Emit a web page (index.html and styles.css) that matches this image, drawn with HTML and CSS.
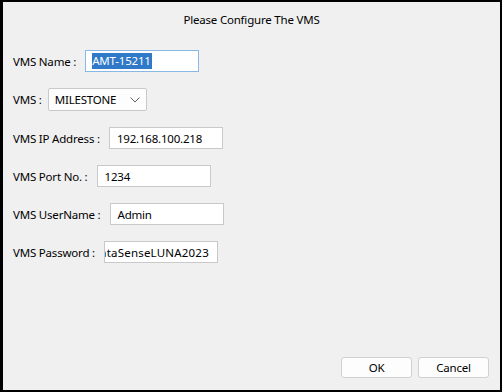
FILE: index.html
```html
<!DOCTYPE html>
<html>
<head>
<meta charset="utf-8">
<link rel="stylesheet" href="styles.css">
</head>
<body>
<div class="dialog">
  <div class="title">Please Configure The VMS</div>
  <div class="form">
    <div class="row">
      <span class="label">VMS Name :</span>
      <div class="field focused"><span class="sel">AMT-15211</span></div>
    </div>
    <div class="row row-tight">
      <span class="label">VMS :</span>
      <div class="combo">
        <span>MILESTONE</span>
        <svg class="chev" width="10" height="6" viewBox="0 0 10 6"><polyline points="0.5,0.5 5,5 9.5,0.5" fill="none" stroke="#606060" stroke-width="1"/></svg>
      </div>
    </div>
    <div class="row">
      <span class="label">VMS IP Address :</span>
      <div class="field">192.168.100.218</div>
    </div>
    <div class="row">
      <span class="label">VMS Port No. :</span>
      <div class="field">1234</div>
    </div>
    <div class="row">
      <span class="label">VMS UserName :</span>
      <div class="field">Admin</div>
    </div>
    <div class="row">
      <span class="label">VMS Password :</span>
      <div class="field right"><span class="pw">DataSenseLUNA2023</span></div>
    </div>
  </div>
  <div class="footer">
    <button class="btn">OK</button>
    <button class="btn">Cancel</button>
  </div>
</div>
</body>
</html>
```

FILE: styles.css
```css
html, body {
  margin: 0;
  padding: 0;
}
body {
  width: 502px;
  height: 392px;
  font-family: "Noto Sans", "Open Sans", sans-serif;
  font-size: 11.5px;
  letter-spacing: -0.2px;
  color: #000;
}
.dialog {
  box-sizing: border-box;
  width: 502px;
  height: 392px;
  background: #f0f0f0;
  border: 2px solid #000;
  border-left-width: 3px;
  display: flex;
  flex-direction: column;
}
.title {
  text-align: center;
  margin-top: 10px;
  line-height: 16px;
}
.form {
  display: flex;
  flex-direction: column;
  gap: 16px;
  margin-top: 22px;
  padding-left: 10px;
}
.row {
  display: flex;
  align-items: center;
  gap: 9px;
}
.row-tight {
  gap: 6px;
}
.label {
  white-space: nowrap;
}
.field {
  box-sizing: border-box;
  width: 114px;
  height: 22px;
  background: #fff;
  border: 1px solid #c9c9c9;
  padding: 0 7px;
  display: flex;
  align-items: center;
  white-space: nowrap;
  overflow: hidden;
}
.field.focused {
  border-color: #8ab8e6;
  padding-left: 6px;
}
.field.right {
  justify-content: flex-end;
  padding-right: 8px;
}
.pw {
  flex: none;
  letter-spacing: 0.2px;
}
.sel {
  background: #2f79c8;
  color: #fff;
  line-height: 16px;
  padding-right: 1px;
}
.combo {
  box-sizing: border-box;
  width: 99px;
  height: 23px;
  background: #fdfdfd;
  border: 1px solid #c9c9c9;
  border-radius: 2px;
  padding: 0 6px;
  display: flex;
  align-items: center;
  justify-content: space-between;
}
.chev {
  display: block;
}
.footer {
  margin-top: auto;
  display: flex;
  justify-content: flex-end;
  gap: 6px;
  padding: 0 11px 12px 0;
}
.btn {
  box-sizing: border-box;
  width: 71px;
  height: 21px;
  background: #fdfdfd;
  border: 1px solid #d0d0d0;
  border-radius: 3px;
  font-family: "Noto Sans", "Open Sans", sans-serif;
  font-size: 11.5px;
  letter-spacing: -0.2px;
  color: #000;
  padding: 0;
  line-height: 18px;
}
```
